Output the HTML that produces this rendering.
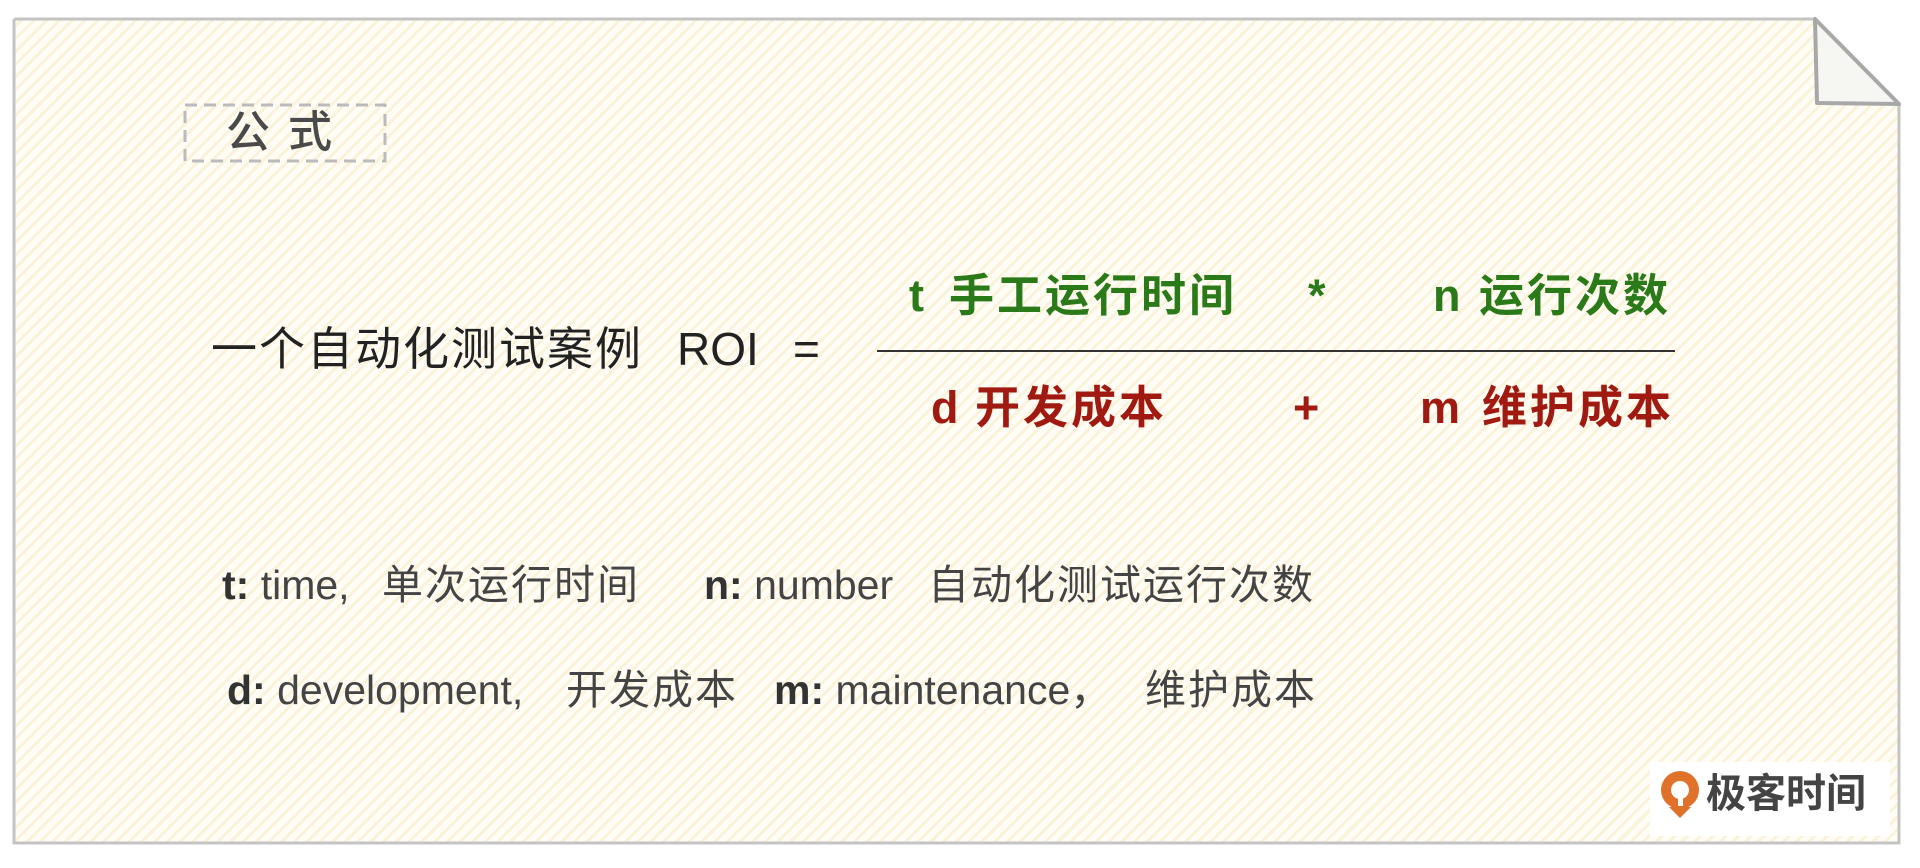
<!DOCTYPE html>
<html><head><meta charset="utf-8"><style>
html,body{margin:0;padding:0;background:#fff;}
body{width:1920px;height:868px;position:relative;overflow:hidden;font-family:"Liberation Sans","Noto Sans CJK SC",sans-serif;}
.bg{position:absolute;left:13px;top:18px;width:1885px;height:825px;
background:repeating-linear-gradient(135deg,#fffdf6 0px,#fffdf6 6px,#fbf3d9 6px,#fbf3d9 9px);
clip-path:polygon(0 0,1802px 0,1885px 85px,1885px 825px,0 825px);}
.t{position:absolute;white-space:nowrap;line-height:1;}
.m{font-size:46px;color:#222;}
.g{font-size:45px;color:#2a7a1a;font-weight:bold;}
.r{font-size:45px;color:#a01a12;font-weight:bold;}
.b{font-size:41px;color:#444;}
.b b{color:#333;}
</style></head><body>
<div class="bg"></div>
<svg width="1920" height="868" style="position:absolute;left:0;top:0">
<path d="M14 19 L1815 19 M14 19 L14 843 L1899 843 L1899 104" stroke="#c4c4c4" stroke-width="3" fill="none"/>
<path d="M1815 19 L1817 103 L1899 104 Z" fill="#f6f6f3" stroke="#a8a8a8" stroke-width="4" stroke-linejoin="round"/>
<rect x="185" y="105" width="200" height="56" fill="none" stroke="#bbb" stroke-width="3" stroke-dasharray="12 7"/>
<rect x="1650" y="762" width="240" height="74" fill="#fff"/>
<line x1="877" y1="351" x2="1675" y2="351" stroke="#333" stroke-width="2"/>
<g transform="translate(1680,795)">
<circle cx="0" cy="-5" r="19" fill="#e0712a"/>
<circle cx="0" cy="-5" r="9" fill="#fff"/>
<path d="M-11 12 L0 23 L11 12 Z" fill="#e0712a"/>
<rect x="-2" y="-5" width="5" height="16" fill="#fff"/>
</g>
</svg>
<div class="t" style="left:226px;top:111px;font-size:44px;color:#4a4a4a;letter-spacing:18px;font-weight:500">公式</div>
<div class="t" style="left:1706px;top:774px;font-size:40px;color:#444;font-weight:bold">极客时间</div>

<div class="t m" style="left:211px;top:326px;letter-spacing:2px">一个自动化测试案例</div>
<div class="t m" style="left:677px;top:326px">ROI</div>
<div class="t m" style="left:793px;top:326px">=</div>

<div class="t g" style="left:909px;top:273px">t</div>
<div class="t g" style="left:949px;top:273px;letter-spacing:3px">手工运行时间</div>
<div class="t g" style="left:1308px;top:273px">*</div>
<div class="t g" style="left:1433px;top:273px">n</div>
<div class="t g" style="left:1479px;top:273px;letter-spacing:3px">运行次数</div>

<div class="t r" style="left:931px;top:385px">d</div>
<div class="t r" style="left:975px;top:385px;letter-spacing:3px">开发成本</div>
<div class="t r" style="left:1293px;top:385px">+</div>
<div class="t r" style="left:1420px;top:385px">m</div>
<div class="t r" style="left:1482px;top:385px;letter-spacing:3px">维护成本</div>

<div class="t b" style="left:222px;top:565px"><b>t:</b> time,</div>
<div class="t b" style="left:382px;top:565px;letter-spacing:2px">单次运行时间</div>
<div class="t b" style="left:704px;top:565px"><b>n:</b> number</div>
<div class="t b" style="left:928px;top:565px;letter-spacing:2px">自动化测试运行次数</div>

<div class="t b" style="left:227px;top:670px"><b>d:</b> development,</div>
<div class="t b" style="left:566px;top:670px;letter-spacing:2px">开发成本</div>
<div class="t b" style="left:774px;top:670px"><b>m:</b> maintenance，</div>
<div class="t b" style="left:1145px;top:670px;letter-spacing:2px">维护成本</div>
</body></html>
